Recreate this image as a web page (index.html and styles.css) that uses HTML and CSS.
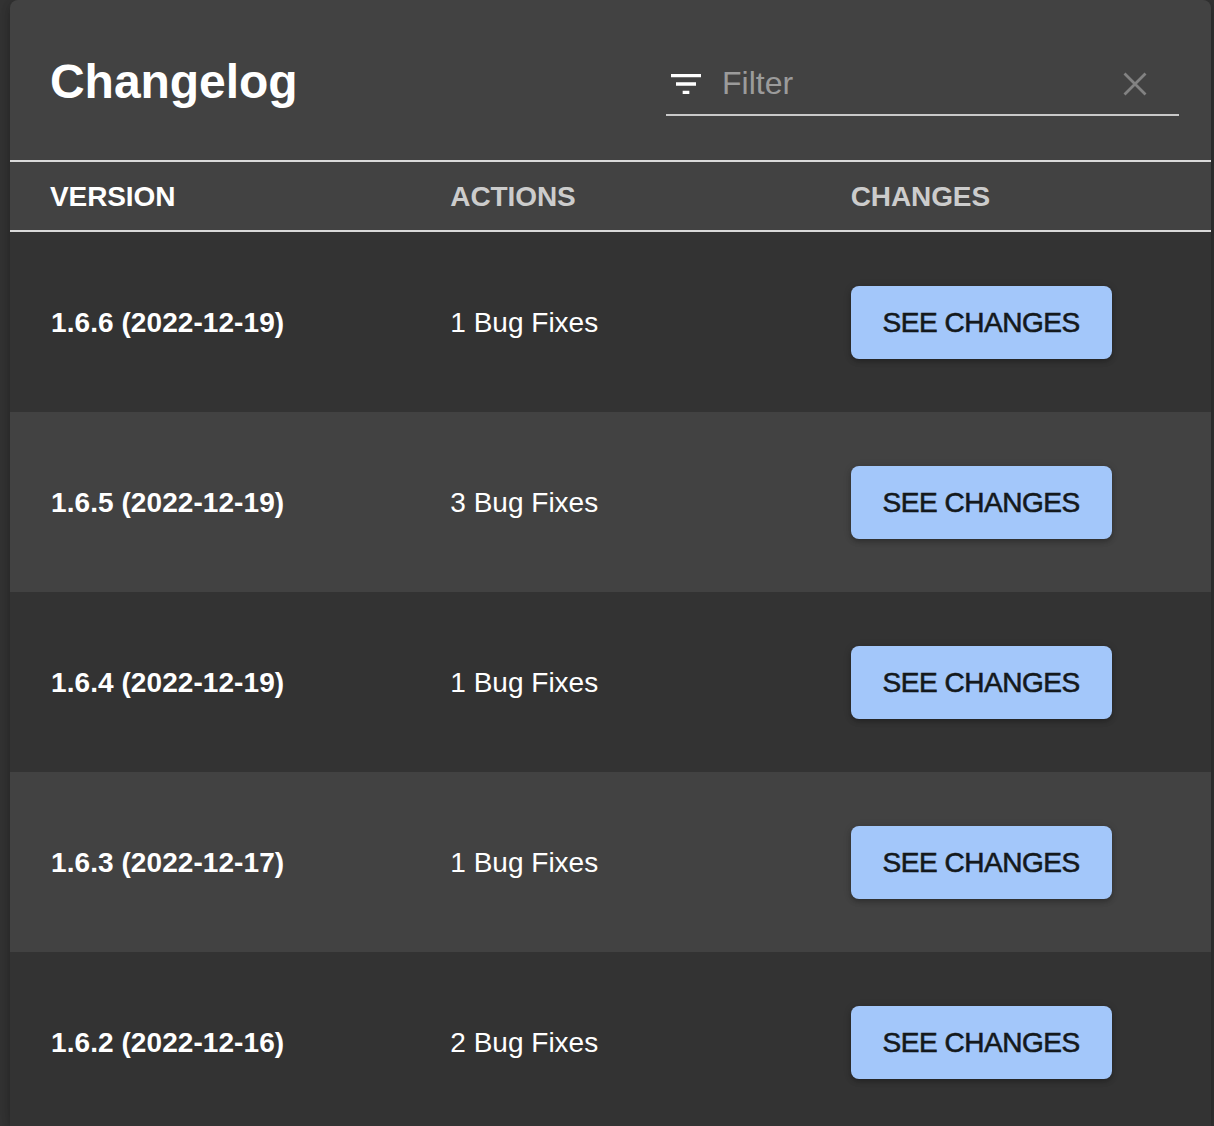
FILE: index.html
```html
<!DOCTYPE html>
<html lang="en">
<head>
<meta charset="utf-8">
<title>Changelog</title>
<link rel="stylesheet" href="styles.css">
</head>
<body>
<main class="card">
  <header class="card-header">
    <h1 class="title">Changelog</h1>
    <div class="filter">
      <svg class="filter-icon" width="40" height="40" viewBox="0 0 24 24"><path fill="#fff" d="M10 18h4v-2h-4v2zM3 6v2h18V6H3zm3 7h12v-2H6v2z"/></svg>
      <input class="filter-input" type="text" placeholder="Filter" aria-label="Filter">
      <svg class="clear-icon" width="24" height="24" viewBox="0 0 24 24"><path d="M1.5 1.5L22.5 22.5M22.5 1.5L1.5 22.5" stroke="#828282" stroke-width="2.8" fill="none"/></svg>
    </div>
  </header>
  <div class="row head"><div class="sorted">VERSION</div><div>ACTIONS</div><div>CHANGES</div></div>
  <div class="row entry"><div class="version">1.6.6 (2022-12-19)</div><div>1 Bug Fixes</div><div><button class="button">SEE CHANGES</button></div></div>
  <div class="row entry"><div class="version">1.6.5 (2022-12-19)</div><div>3 Bug Fixes</div><div><button class="button">SEE CHANGES</button></div></div>
  <div class="row entry"><div class="version">1.6.4 (2022-12-19)</div><div>1 Bug Fixes</div><div><button class="button">SEE CHANGES</button></div></div>
  <div class="row entry"><div class="version">1.6.3 (2022-12-17)</div><div>1 Bug Fixes</div><div><button class="button">SEE CHANGES</button></div></div>
  <div class="row entry"><div class="version">1.6.2 (2022-12-16)</div><div>2 Bug Fixes</div><div><button class="button">SEE CHANGES</button></div></div>
</main>
</body>
</html>
```
FILE: styles.css
```css
* { box-sizing: border-box; }
body {
  margin: 0;
  height: 1126px;
  overflow: hidden;
  background: #333;
  color: #fff;
  font: 28px/36px "Liberation Sans", Arial, sans-serif;
}
.card {
  width: 1201px;
  height: 1126px;
  margin-left: 10px;
  background: #424242;
  border-radius: 8px 8px 0 0;
  overflow: hidden;
  box-shadow: 0 4px 8px rgba(0, 0, 0, .2), 0 0 20px rgba(0, 0, 0, .16);
}
.card-header {
  height: 160px;
  padding: 52px 32px 0 40px;
  display: flex;
  justify-content: space-between;
}
.title { margin: 0; font-size: 48px; line-height: 60px; letter-spacing: -.05px; }
.filter {
  width: 513px;
  height: 64px;
  display: flex;
  align-items: center;
  border-bottom: 2px solid #c9c9c9;
}
.filter-icon { margin-top: 2px; }
.filter-input {
  flex: 1;
  min-width: 0;
  height: 48px;
  margin: 0 0 0 16px;
  padding: 0;
  border: 0;
  outline: 0;
  background: transparent;
  color: #fff;
  font: 32px "Liberation Sans", Arial, sans-serif;
}
.filter-input::placeholder { color: #9b9b9b; opacity: 1; }
.clear-icon { margin: 2px 32px 0 0; }
.row {
  display: grid;
  grid-template-columns: repeat(3, 1fr);
  align-items: center;
}
.row > div { padding: 2px 0 0 40px; }
.head {
  height: 72px;
  border: solid #dadada;
  border-width: 2px 0;
  color: #ccc;
  font-weight: bold;
  letter-spacing: -.1px;
}
.sorted { color: #fff; }
.entry { height: 180px; }
.entry:nth-child(odd) { background: #333; }
.entry > .version { padding-left: 41px; font-weight: bold; letter-spacing: .07px; }
.button {
  display: block;
  width: 261px;
  height: 73px;
  margin-bottom: 1px;
  padding: 1px 0 0;
  border: 0;
  border-radius: 8px;
  background: #a3c7fa;
  color: #14191c;
  font: 28px "Liberation Sans", Arial, sans-serif;
  letter-spacing: -.45px;
  -webkit-text-stroke: .6px #14191c;
  box-shadow: 0 3px 5px rgba(0, 0, 0, .22), 0 1px 9px rgba(0, 0, 0, .12);
}
```
